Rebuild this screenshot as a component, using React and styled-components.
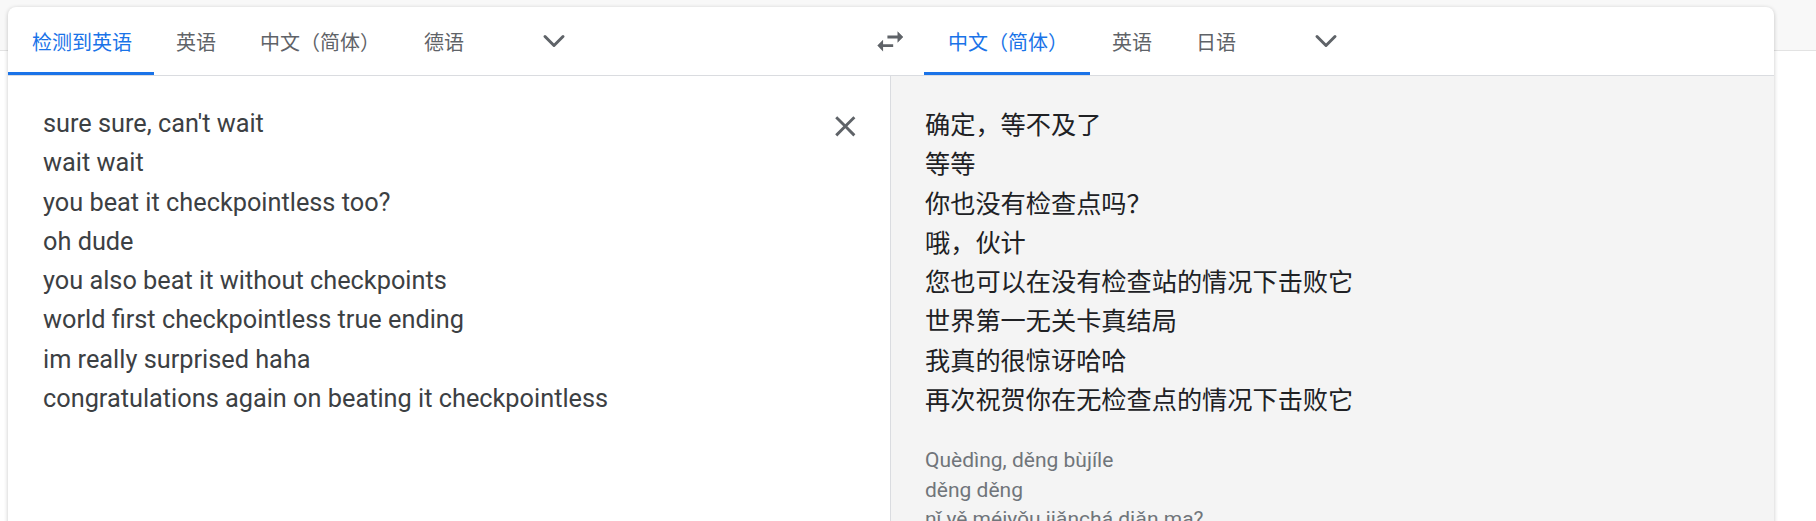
import React from "react";
import styled, { createGlobalStyle } from "styled-components";
import { ChevronDown } from "lucide-react";

const sourceTabs = ["检测到英语", "英语", "中文（简体）", "德语"];
const targetTabs = ["中文（简体）", "英语", "日语"];

const sourceLines = [
  "sure sure, can't wait",
  "wait wait",
  "you beat it checkpointless too?",
  "oh dude",
  "you also beat it without checkpoints",
  "world first checkpointless true ending",
  "im really surprised haha",
  "congratulations again on beating it checkpointless",
];

const targetLines = [
  "确定，等不及了",
  "等等",
  "你也没有检查点吗？",
  "哦，伙计",
  "您也可以在没有检查站的情况下击败它",
  "世界第一无关卡真结局",
  "我真的很惊讶哈哈",
  "再次祝贺你在无检查点的情况下击败它",
];

const pinyinLines = [
  "Quèdìng, děng bùjíle",
  "děng děng",
  "nǐ yě méiyǒu jiǎnchá diǎn ma?",
];

const Translator = () => {
  return (
    <Page>
      <GlobalStyle />
      <Card>
        <Header>
          <LangSide>
            {sourceTabs.map((t, i) => (
              <Tab key={t} active={i === 0}>
                {t}
              </Tab>
            ))}
            <MoreButton>
              <ChevronDown size={36} strokeWidth={2} />
            </MoreButton>
          </LangSide>
          <SwapButton>
            <svg width="34.6" height="34.6" viewBox="0 0 24 24" fill="#5f6368">
              <path d="M6.99 11L3 15l3.99 4v-3H14v-2H6.99v-3zM21 9l-3.99-4v3H10v2h7.01v3L21 9z" />
            </svg>
          </SwapButton>
          <LangSide>
            {targetTabs.map((t, i) => (
              <Tab key={t} active={i === 0}>
                {t}
              </Tab>
            ))}
            <MoreButton>
              <ChevronDown size={36} strokeWidth={2} />
            </MoreButton>
          </LangSide>
        </Header>
        <Body>
          <SourcePanel>
            {sourceLines.map((l) => (
              <div key={l}>{l}</div>
            ))}
            <ClearButton>
              <svg width="34.6" height="34.6" viewBox="0 0 24 24" fill="#5f6368">
                <path d="M19 6.41L17.59 5 12 10.59 6.41 5 5 6.41 10.59 12 5 17.59 6.41 19 12 13.41 17.59 19 19 17.59 13.41 12z" />
              </svg>
            </ClearButton>
          </SourcePanel>
          <TargetPanel>
            {targetLines.map((l) => (
              <div key={l}>{l}</div>
            ))}
            <Pinyin>
              {pinyinLines.map((l) => (
                <div key={l}>{l}</div>
              ))}
            </Pinyin>
          </TargetPanel>
        </Body>
      </Card>
    </Page>
  );
};

export default Translator;

const GlobalStyle = createGlobalStyle`
  html, body {
    margin: 0;
    padding: 0;
  }
  body {
    width: 1816px;
    height: 521px;
    overflow: hidden;
    background: #fff;
    font-family: Roboto, "Noto Sans CJK SC", sans-serif;
  }
`;

const Page = styled.div`
  height: 521px;
  box-sizing: border-box;
  padding: 7px 42px 0 8px;
  overflow: hidden;
  background: linear-gradient(
    #f8f8f8 0,
    #f8f8f8 50px,
    #e3e3e3 50px,
    #e3e3e3 51px,
    #fff 51px
  );
`;

const Card = styled.div`
  height: 600px;
  background: #fff;
  border-radius: 8px 8px 0 0;
  box-shadow: 0 1px 4px rgba(0, 0, 0, 0.22);
  overflow: hidden;
`;

const Header = styled.div`
  display: flex;
  height: 68px;
  border-bottom: 1px solid #dadce0;
`;

const LangSide = styled.div`
  flex: 1;
  display: flex;
  align-items: stretch;
  padding-left: 2px;
  &:first-child {
    padding-left: 0;
  }
`;

const Tab = styled.div`
  display: flex;
  align-items: center;
  padding: 0 22px;
  font-size: 20px;
  font-family: "Noto Sans CJK SC", sans-serif;
  color: ${(p) => (p.active ? "#1a73e8" : "#5f6368")};
  border-top: 3px solid transparent;
  border-bottom: 3px solid ${(p) => (p.active ? "#1a73e8" : "transparent")};
  white-space: nowrap;
  &:first-child {
    padding-left: 24px;
  }
`;

const MoreButton = styled.div`
  display: flex;
  align-items: center;
  justify-content: center;
  width: 48px;
  margin-left: 44px;
  color: #5f6368;
`;

const SwapButton = styled.div`
  display: flex;
  align-items: center;
  justify-content: center;
  width: 64px;
`;

const Body = styled.div`
  display: grid;
  grid-template-columns: 1fr 1fr;
  height: 531px;
`;

const SourcePanel = styled.div`
  position: relative;
  padding: 28px 80px 0 35px;
  border-right: 1px solid #dadce0;
  font-size: 25.3px;
  line-height: 39.3px;
  color: #3c4043;
`;

const ClearButton = styled.div`
  position: absolute;
  top: 26px;
  right: 21px;
  width: 48px;
  height: 48px;
  display: flex;
  align-items: center;
  justify-content: center;
`;

const TargetPanel = styled.div`
  padding: 28px 34px 0 34px;
  background: #f4f4f4;
  font-family: "Noto Sans CJK SC", sans-serif;
  font-size: 25.2px;
  line-height: 39.3px;
  color: #202124;
`;

const Pinyin = styled.div`
  margin-top: 28px;
  font-family: Roboto, sans-serif;
  font-size: 21px;
  line-height: 29.5px;
  color: #70757a;
`;
